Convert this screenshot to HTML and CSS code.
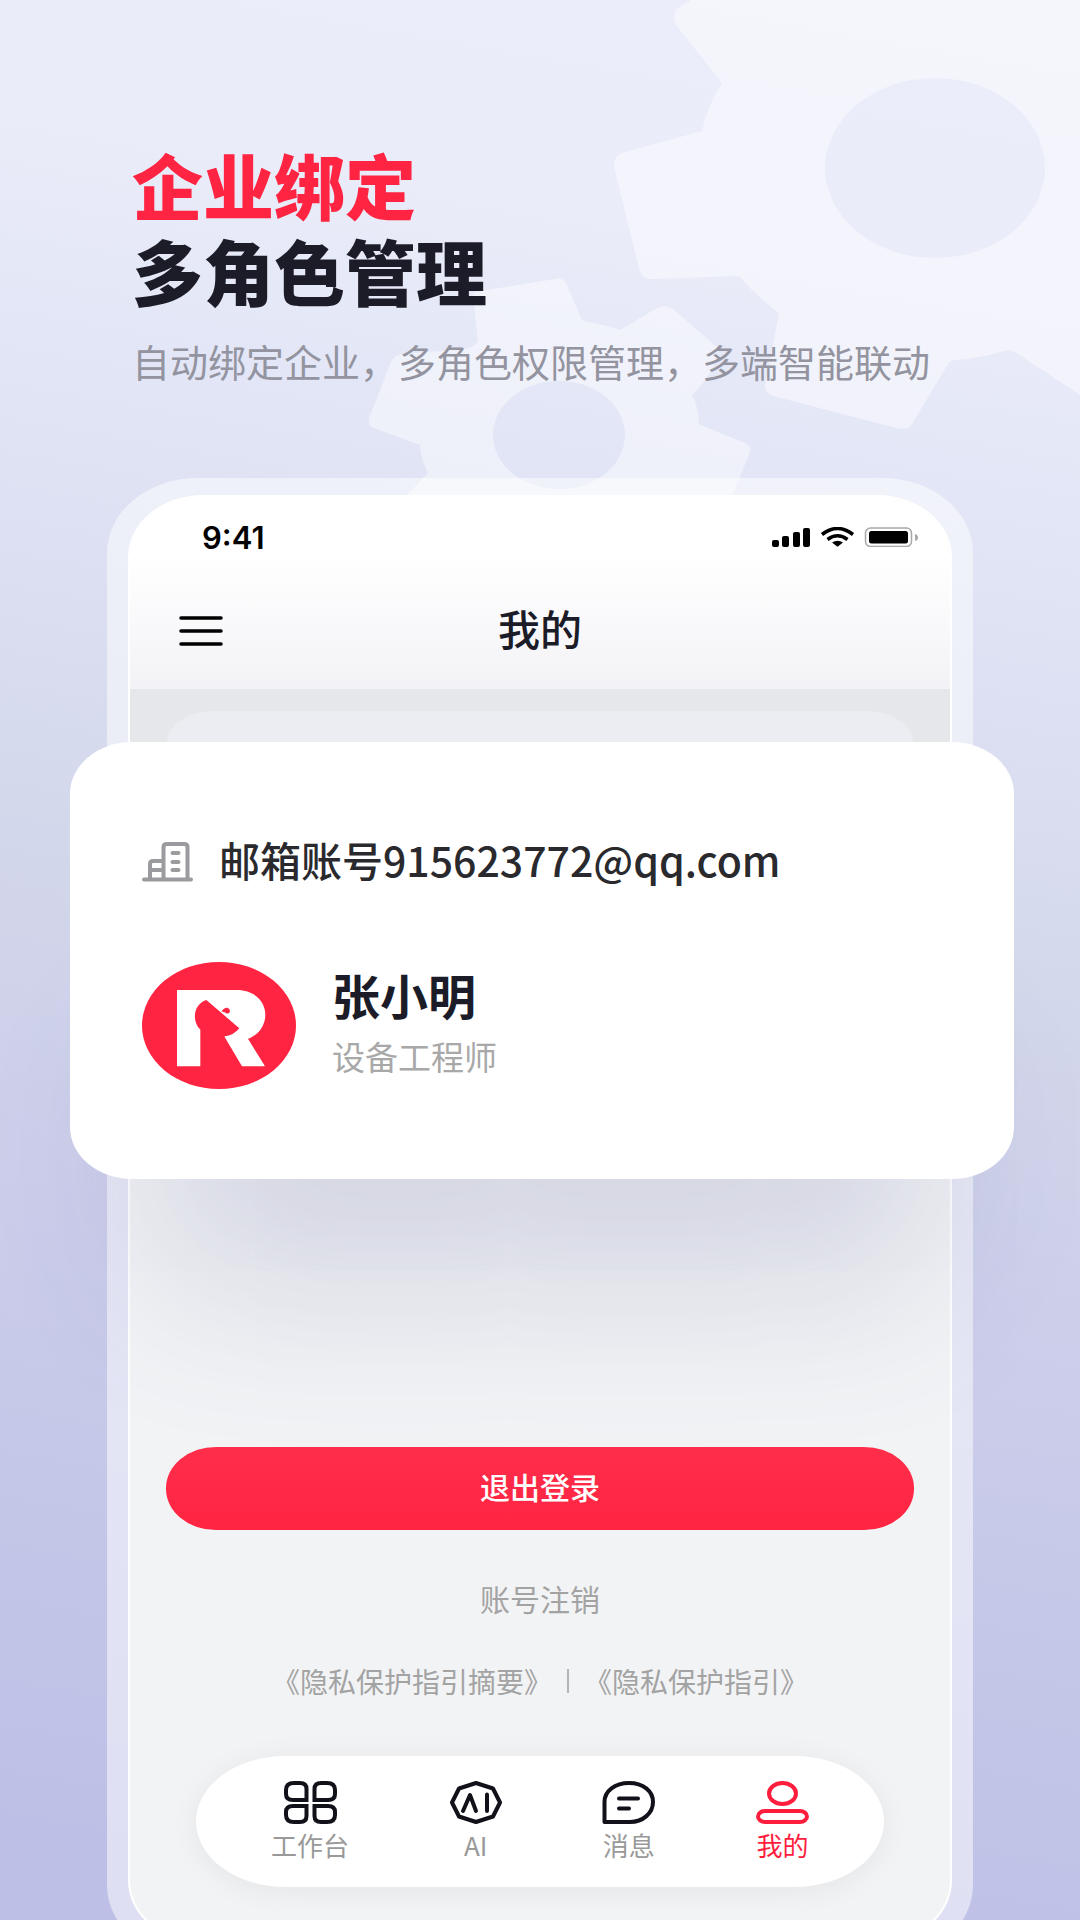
FILE: index.html
```html
<!DOCTYPE html>
<html lang="zh-CN">

<head>
    <meta charset="UTF-8">
    <meta name="viewport" content="width=device-width, initial-scale=1.0">
    <title>企业绑定 多角色管理</title>
    <link rel="stylesheet" href="styles.css">
</head>

<body>
    <div class="page">
        <!-- background gears -->
        <svg class="gears" viewBox="0 0 1080 560" aria-hidden="true">
            <path fill-rule="evenodd" d="M691 0 L677 9 Q672 15 676 25 L722 83 Q708 104 702 131 L622 153 Q613 157 614 167 L640 272 Q643 280 654 279 L739 276 Q756 296 779 313 L765 385 Q765 393 773 396 L896 428 Q908 431 912 424 L948 364 Q950 360 956 360 Q982 358 1004 351 Q1012 349 1018 354 L1080 395 V0 Z M1045 168 A110 90 0 1 0 825 168 A110 90 0 1 0 1045 168 Z" />
            <path fill-rule="evenodd" d="M478 341 L473 296 Q473 292 480 291 L555 279 Q563 277 566 283 L581 318 Q583 321 588 322 Q606 325 620 330 L657 308 Q666 304 673 309 L718 348 Q716 372 692 395 Q699 408 699 424 L745 443 Q751 446 750 452 L733 494 V520 H400 L408 494 L428 473 Q421 460 420 445 L371 427 Q368 425 369 418 L391 362 Q394 355 402 354 L464 349 Q475 347 478 341 Z M625 435 A66 54 0 1 0 493 435 A66 54 0 1 0 625 435 Z" />
        </svg>

        <header class="intro">
            <h1><span class="accent">企业绑定</span><br>多角色管理</h1>
            <p>自动绑定企业，多角色权限管理，多端智能联动</p>
        </header>

        <div class="phone">
            <main class="screen">
                <div class="top">
                    <div class="status">
                        <span>9:41</span>
                        <svg width="147" height="20" viewBox="0 0 147 20" aria-hidden="true">
                            <rect x="0" y="13" width="7" height="7" rx="2" />
                            <rect x="10" y="9" width="7" height="11" rx="2" />
                            <rect x="21" y="5" width="7" height="15" rx="2" />
                            <rect x="31" y="1" width="7" height="19" rx="2" />
                            <g fill="none" stroke="#000" stroke-width="3.500">
                                <path d="M50 7.500 Q65.500 -4.500 81 7.500" />
                                <path d="M55.500 12.500 Q65.500 5 75.500 12.500" />
                            </g>
                            <path d="M60 15.500 Q65.500 12 71 15.500 L66.500 19 Q65.500 20 64.500 19 Z" />
                            <rect x="93.500" y="1" width="46" height="18.500" rx="5" fill="none" stroke="#a8a8a8" stroke-width="1.500" />
                            <rect x="97" y="4" width="39" height="12.500" rx="2.500" />
                            <path d="M143 7 Q146 8 146 10.500 Q146 13 143 14 Z" fill="#a8a8a8" />
                        </svg>
                    </div>
                    <div class="nav">
                        <button class="menu" aria-label="菜单">
                            <svg width="44" height="30" viewBox="0 0 44 30">
                                <path d="M2 2 H42 M2 15 H42 M2 28 H42" stroke="#000" stroke-width="3.500" stroke-linecap="round" />
                            </svg>
                        </button>
                        <h2>我的</h2>
                    </div>
                </div>

                <div class="stub"></div>
                <section class="card">
                    <div class="account">
                        <svg width="51" height="40" viewBox="0 0 51 40" fill="none" stroke="#9b9b9f" stroke-width="4" stroke-linecap="round" aria-hidden="true">
                            <path d="M2 37.500 H49" />
                            <path d="M21.500 37 V5 Q21.500 2 25 2 H42 Q45.500 2 45.500 5 V37" />
                            <path d="M8 37 V22 Q8 19 11 19 H21 M9 28 H20" />
                            <path d="M30.500 11 H36.500 M30.500 20 H36.500 M30.500 28 H36.500" />
                        </svg>
                        <span>邮箱账号915623772@qq.com</span>
                    </div>
                    <div class="profile">
                        <svg width="154" height="127" viewBox="0 0 462 380" preserveAspectRatio="none" aria-hidden="true">
                            <ellipse cx="231" cy="190" rx="231" ry="190" fill="#ff2442" />
                            <path fill="#fff" d="M105 84 H285 C335 84 370 116 370 158 C370 190 350 218 318 230 L369 312 H300 L247 223 Q275 219 292 198 L193 114 C167 122 154 150 160 175 Q164 193 175 202 V312 H105 Z" />
                            <path fill="#ff2442" d="M239 148 Q246 136 256 137 Q264 139 264 147 Q263 154 254 154 Q249 150 239 148 Z" />
                        </svg>
                        <div class="who">
                            <h3>张小明</h3>
                            <p>设备工程师</p>
                        </div>
                    </div>
                </section>

                <button class="logout">退出登录</button>
                <a class="cancel" href="#">账号注销</a>
                <div class="links">
                    <a href="#">《隐私保护指引摘要》</a>
                    <span class="divider"></span>
                    <a href="#">《隐私保护指引》</a>
                </div>

                <nav class="tabs">
                    <a href="#">
                        <svg width="53" height="43" viewBox="0 0 53 43" fill="none" stroke="#11111a" stroke-width="4">
                            <path d="M22.500 19 V8 Q22.500 2 16 2 H10 Q2 2 2 9 V13 Q2 19 9 19 Z" />
                            <path d="M30.500 19 V8 Q30.500 2 37 2 H43 Q51 2 51 9 V13 Q51 19 44 19 Z" />
                            <path d="M22.500 25 V35 Q22.500 41 16 41 H10 Q2 41 2 34 V31 Q2 25 9 25 Z" />
                            <path d="M30.500 25 V35 Q30.500 41 37 41 H43 Q51 41 51 34 V31 Q51 25 44 25 Z" />
                        </svg>
                        工作台
                    </a>
                    <a href="#">
                        <svg width="52" height="43" viewBox="0 0 52 43" fill="none" stroke="#11111a" stroke-width="4" stroke-linejoin="round" stroke-linecap="round">
                            <path d="M26 2 L43 7.500 L50 21.500 L43 35.500 L26 41 L9 35.500 L2 21.500 L9 7.500 Z" />
                            <path d="M13 30 L20 14 L26 30 M37 13.500 V30" />
                        </svg>
                        AI
                    </a>
                    <a href="#">
                        <svg width="53" height="43" viewBox="0 0 53 43" fill="none" stroke="#11111a" stroke-width="4" stroke-linejoin="round" stroke-linecap="round">
                            <path d="M2.500 41 V21 C2.500 10 13 2 27 2 C41 2 51 10 51 21 C51 32 41 41 28 41 Z" />
                            <path d="M17 17.500 H36 M17 27.500 H27" />
                        </svg>
                        消息
                    </a>
                    <a href="#" class="active">
                        <svg width="53" height="43" viewBox="0 0 53 43" fill="none" stroke="#ff1d3d" stroke-width="4">
                            <ellipse cx="26.500" cy="12.500" rx="13.500" ry="10.500" />
                            <rect x="2" y="30" width="49" height="11" rx="7" ry="5.500" />
                        </svg>
                        我的
                    </a>
                </nav>
            </main>
        </div>
    </div>
</body>

</html>
```
FILE: styles.css
```css
* {
    box-sizing: border-box;
}

body {
    margin: 0;
    font-family: "Noto Sans CJK SC", sans-serif;
    color: #1c1c28;
}

h1, h2, h3, p {
    margin: 0;
}

a {
    color: inherit;
    text-decoration: none;
}

button {
    border: none;
    padding: 0;
    background: none;
    font-family: inherit;
    cursor: pointer;
}

svg {
    display: block;
    flex-shrink: 0;
}

.page {
    position: relative;
    min-height: 100vh;
    overflow: hidden;
    background: linear-gradient(190deg, #ebeefa 0%, #eaecf9 14%, #e0e4f5 28%, #d2d6ea 50%, #cbcdea 66%, #bdbfe6 96%);
}

.gears {
    position: absolute;
    top: 0;
    right: 0;
    width: 1080px;
    fill: rgba(255, 255, 255, 0.45);
}

.intro {
    position: relative;
    padding: 140px 132px 0;
}

.intro h1 {
    font-size: 71px;
    font-weight: 900;
    line-height: 86px;
}

.accent {
    color: #ff2442;
}

.intro p {
    margin-top: 25px;
    font-size: 38px;
    line-height: 48px;
    color: #9394a0;
}

/* the bottom of the phone runs off the page */
.phone {
    position: relative;
    margin: 93px 107px -40px;
    padding: 17px 21px;
    border-radius: 90px / 75px;
    background: rgba(255, 255, 255, 0.5);
}

.screen {
    display: flex;
    flex-direction: column;
    border: 2px solid #fff;
    border-radius: 75px / 62px;
    background: #f2f3f5;
}

.top {
    border-radius: 73px 73px 0 0 / 60px 60px 0 0;
    background: linear-gradient(#fff 30%, #f3f3f7);
}

.status {
    display: flex;
    justify-content: space-between;
    align-items: center;
    height: 80px;
    padding: 0 31px 0 72px;
    font-family: Inter, sans-serif;
    font-size: 31px;
    font-weight: 600;
    color: #000;
}

.nav {
    display: grid;
    grid-template-columns: 1fr auto 1fr;
    align-items: center;
    height: 112px;
    padding: 0 49px 4px;
}

.menu {
    justify-self: start;
}

.nav h2 {
    padding-bottom: 6px;
    font-size: 42px;
    font-weight: 500;
    line-height: 54px;
}

.stub {
    height: 53px;
    padding: 22px 37px 0;
    background: #e6e7ea;
}

.stub::before {
    content: "";
    display: block;
    height: 31px;
    border-radius: 50px 50px 0 0 / 32px 32px 0 0;
    background: #ecedf2;
}

.card {
    margin: 0 -64px 0 -60px;
    padding: 90px 72px;
    border-radius: 62px / 52px;
    background: #fff;
    box-shadow: 0 190px 170px -90px rgba(80, 85, 150, 0.2);
}

.account {
    display: flex;
    align-items: center;
    gap: 26px;
    font-size: 41px;
    font-weight: 500;
    line-height: 54px;
    color: #2a2a2e;
}

.account span {
    padding-bottom: 6px;
}

.profile {
    display: flex;
    align-items: center;
    gap: 36px;
    margin-top: 70px;
}

.who {
    padding-bottom: 10px;
}

.profile h3 {
    font-size: 48px;
    font-weight: 700;
    line-height: 60px;
}

.profile p {
    margin-top: 10px;
    font-size: 33px;
    line-height: 44px;
    color: #a8a8a8;
}

.logout {
    position: relative;
    height: 83px;
    margin: 268px 36px 0;
    padding-bottom: 6px;
    border-radius: 50px / 41px;
    background: linear-gradient(#ff2e4b, #ff2442);
    font-size: 30px;
    font-weight: 500;
    color: #fff;
}

.cancel {
    align-self: center;
    margin-top: 47px;
    font-size: 30px;
    line-height: 42px;
    color: #a3a3a3;
}

.links {
    display: flex;
    justify-content: center;
    align-items: center;
    gap: 15px;
    margin-top: 42px;
    font-size: 28px;
    line-height: 40px;
    color: #a3a3a3;
}

.divider {
    width: 2px;
    height: 24px;
    background: #b4b4b4;
}

.tabs {
    display: flex;
    justify-content: space-between;
    margin: 55px 66px 54px;
    padding: 25px 75px 24px;
    border-radius: 90px / 66px;
    background: #fff;
    box-shadow: 0 4px 30px rgba(0, 0, 0, 0.06);
    font-size: 26px;
    line-height: 36px;
    color: #999;
}

.tabs a {
    display: flex;
    flex-direction: column;
    align-items: center;
    gap: 3px;
}

.tabs .active {
    color: #ff1d3d;
}
```
